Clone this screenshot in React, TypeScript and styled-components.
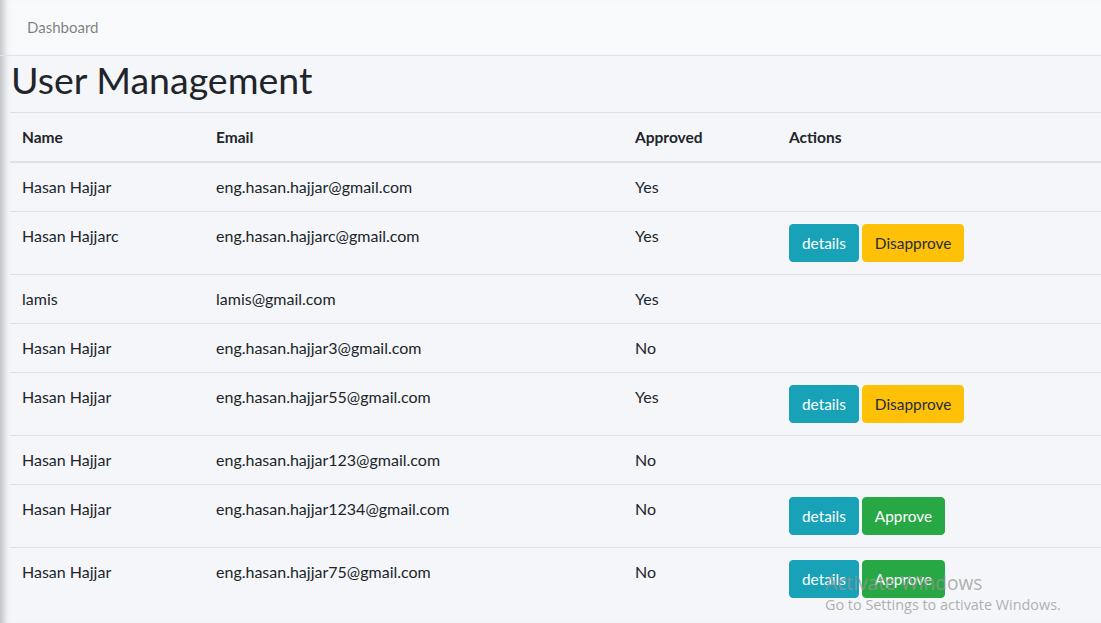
import React from "react";
import styled, { createGlobalStyle } from "styled-components";

const Global = createGlobalStyle`
  html, body { margin: 0; padding: 0; background: #f4f6f9; }
  body {
    font-family: "Lato", "Open Sans", sans-serif;
    font-size: 16px;
    line-height: 1.5;
    color: #212529;
  }
  * { box-sizing: border-box; }
`;

const Page = styled.div`
  position: relative;
  min-height: 623px;
  background: #f4f6f9;
  overflow: hidden;
  box-shadow: inset 9px 0 6px -5px rgba(0, 0, 0, 0.22);
`;

const Navbar = styled.nav`
  height: 56px;
  display: flex;
  align-items: center;
  padding-left: 27px;
  background: #f8f9fa;
  border-bottom: 1px solid #dee2e6;
  box-shadow: inset 9px 0 6px -5px rgba(0, 0, 0, 0.22);
`;

const NavLink = styled.a`
  color: rgba(0, 0, 0, 0.5);
  font-size: 15px;
  text-decoration: none;
`;

const Content = styled.section`
  padding-left: 10px;
`;

const Title = styled.h1`
  margin: 0;
  padding: 0 0 8px 1px;
  font-size: 37.5px;
  font-weight: 400;
  line-height: 48px;
  color: #212529;
`;

const Table = styled.table`
  width: 100%;
  border-collapse: collapse;
  table-layout: fixed;
`;

const Th = styled.th<{ $w?: number }>`
  text-align: left;
  font-weight: 700;
  padding: 12px;
  line-height: 24px;
  font-size: 15.5px;
  border-top: 1px solid #dee2e6;
  border-bottom: 2px solid #dee2e6;
  vertical-align: bottom;
  width: ${(p) => (p.$w ? `${p.$w}px` : "auto")};
`;

const Td = styled.td`
  padding: 12px;
  line-height: 24px;
  font-size: 16px;
  border-top: 1px solid #dee2e6;
  vertical-align: top;
  white-space: nowrap;
`;

const Actions = styled.div`
  display: flex;
  gap: 3px;
`;

const Btn = styled.button<{ $variant: "info" | "warning" | "success" }>`
  font-family: inherit;
  font-size: 15.4px;
  line-height: 24px;
  padding: 6px 12px;
  border-radius: 4px;
  cursor: pointer;
  border: 1px solid
    ${(p) =>
      p.$variant === "info" ? "#17a2b8" : p.$variant === "warning" ? "#ffc107" : "#28a745"};
  background: ${(p) =>
    p.$variant === "info" ? "#17a2b8" : p.$variant === "warning" ? "#ffc107" : "#28a745"};
  color: ${(p) => (p.$variant === "warning" ? "#1f2d3d" : "#ffffff")};
`;

const Watermark = styled.div`
  position: absolute;
  left: 825px;
  top: 571px;
  font-family: "Open Sans", "Noto Sans", sans-serif;
  color: rgba(150, 150, 150, 0.75);
  pointer-events: none;
`;

const WmTitle = styled.div`
  font-size: 19.2px;
  line-height: 24px;
`;

const WmSub = styled.div`
  font-size: 14.4px;
  line-height: 20px;
`;

type User = { name: string; email: string; approved: boolean; actions: boolean };

const users: User[] = [
  { name: "Hasan Hajjar", email: "eng.hasan.hajjar@gmail.com", approved: true, actions: false },
  { name: "Hasan Hajjarc", email: "eng.hasan.hajjarc@gmail.com", approved: true, actions: true },
  { name: "lamis", email: "lamis@gmail.com", approved: true, actions: false },
  { name: "Hasan Hajjar", email: "eng.hasan.hajjar3@gmail.com", approved: false, actions: false },
  { name: "Hasan Hajjar", email: "eng.hasan.hajjar55@gmail.com", approved: true, actions: true },
  { name: "Hasan Hajjar", email: "eng.hasan.hajjar123@gmail.com", approved: false, actions: false },
  { name: "Hasan Hajjar", email: "eng.hasan.hajjar1234@gmail.com", approved: false, actions: true },
  { name: "Hasan Hajjar", email: "eng.hasan.hajjar75@gmail.com", approved: false, actions: true },
];

export default function App() {
  return (
    <Page>
      <Global />
      <Navbar>
        <NavLink href="#">Dashboard</NavLink>
      </Navbar>
      <Content>
        <Title>User Management</Title>
        <Table>
          <thead>
            <tr>
              <Th $w={194}>Name</Th>
              <Th $w={419}>Email</Th>
              <Th $w={154}>Approved</Th>
              <Th>Actions</Th>
            </tr>
          </thead>
          <tbody>
            {users.map((u, i) => (
              <tr key={i}>
                <Td>{u.name}</Td>
                <Td>{u.email}</Td>
                <Td>{u.approved ? "Yes" : "No"}</Td>
                <Td>
                  {u.actions && (
                    <Actions>
                      <Btn $variant="info">details</Btn>
                      {u.approved ? (
                        <Btn $variant="warning">Disapprove</Btn>
                      ) : (
                        <Btn $variant="success">Approve</Btn>
                      )}
                    </Actions>
                  )}
                </Td>
              </tr>
            ))}
          </tbody>
        </Table>
      </Content>
      <Watermark>
        <WmTitle>Activate Windows</WmTitle>
        <WmSub>Go to Settings to activate Windows.</WmSub>
      </Watermark>
    </Page>
  );
}
